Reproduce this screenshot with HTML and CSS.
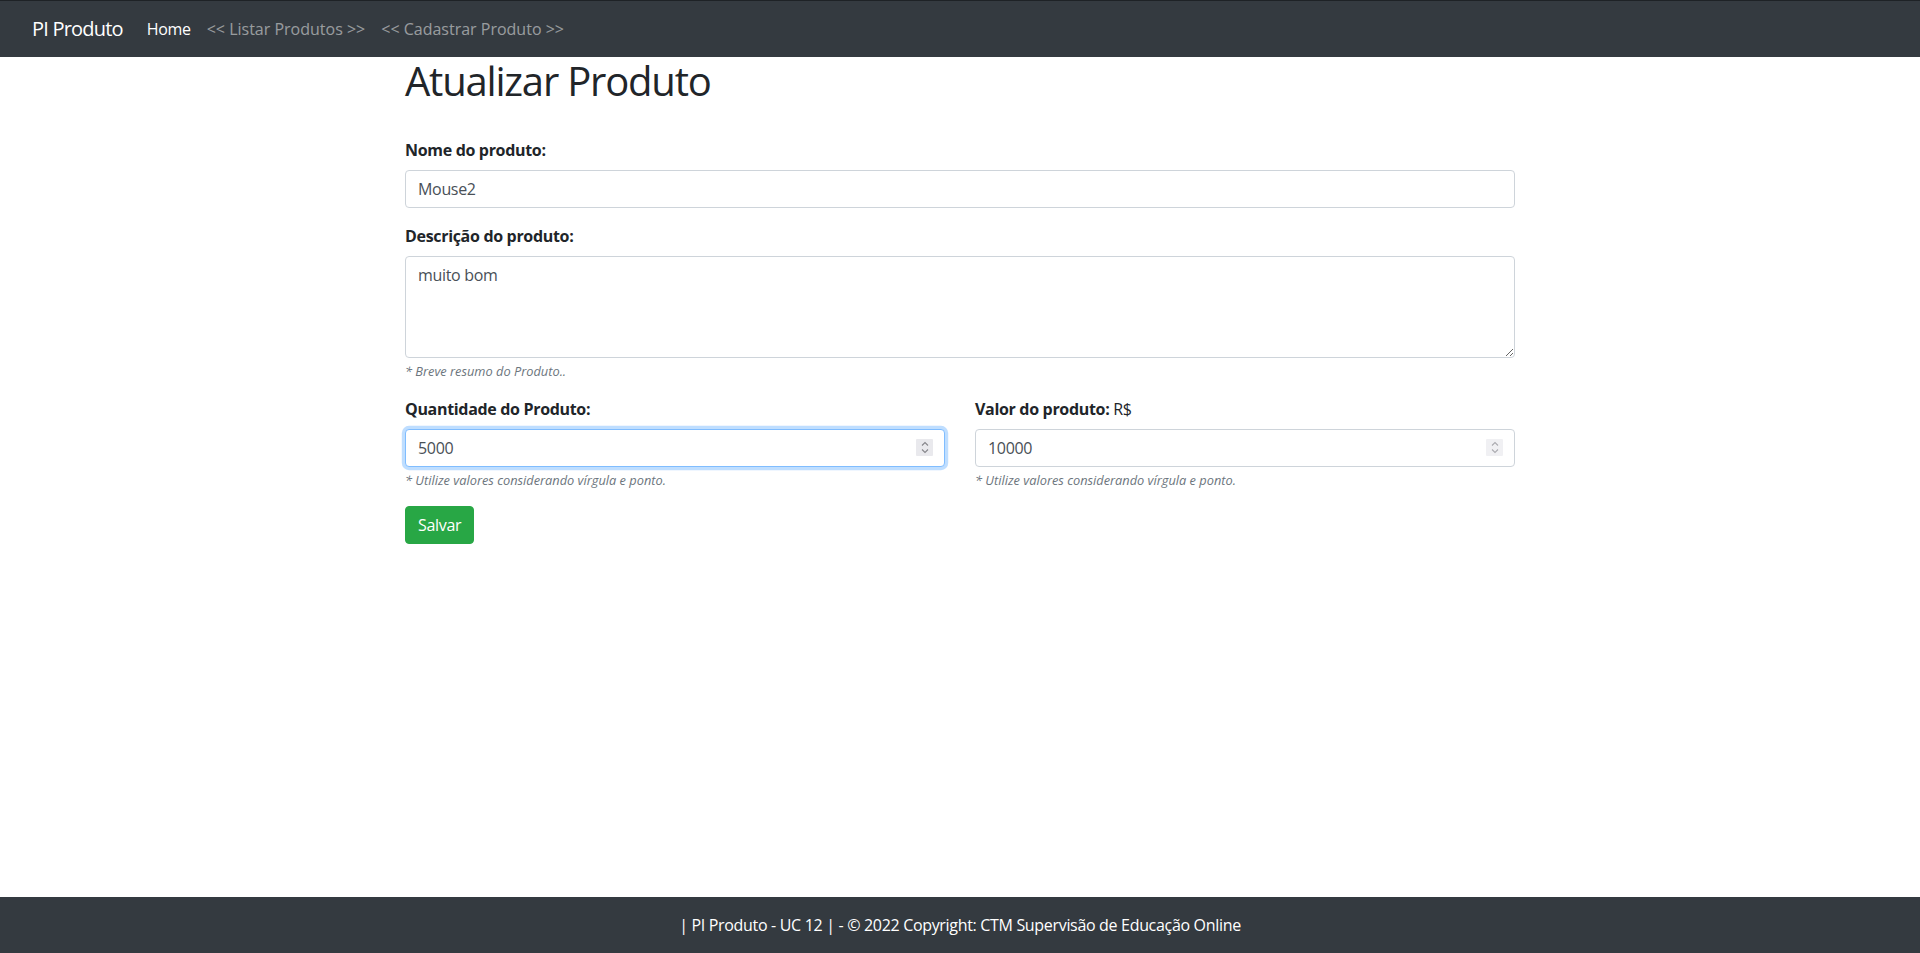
FILE: index.html
```html
<!DOCTYPE html>
<html lang="pt-br">
<head>
<meta charset="utf-8">
<title>PI Produto</title>
<link rel="stylesheet" href="styles.css">
</head>
<body>
<nav class="navbar">
  <a class="brand" href="#">PI Produto</a>
  <ul class="nav">
    <li><a class="nav-link active" href="#">Home</a></li>
    <li><a class="nav-link" href="#">&lt;&lt; Listar Produtos &gt;&gt;</a></li>
    <li><a class="nav-link" href="#">&lt;&lt; Cadastrar Produto &gt;&gt;</a></li>
  </ul>
</nav>
<main class="container">
  <h1 class="title">Atualizar Produto</h1>
  <form class="form">
    <div class="form-group">
      <label class="label" for="nome">Nome do produto:</label>
      <input class="form-control" id="nome" type="text" value="Mouse2">
    </div>
    <div class="form-group">
      <label class="label" for="desc">Descrição do produto:</label>
      <textarea class="form-control textarea" id="desc">muito bom</textarea>
      <small class="form-text">* Breve resumo do Produto..</small>
    </div>
    <div class="row">
      <div class="form-group col">
        <label class="label" for="qtd">Quantidade do Produto:</label>
        <div class="number-wrap">
          <input class="form-control focused" id="qtd" type="number" value="5000">
          <span class="spin" aria-hidden="true">
            <svg width="10" height="15" viewBox="0 0 10 15"><path d="M2 5.5 L5 2.5 L8 5.5 M2 9.5 L5 12.5 L8 9.5" fill="none" stroke="#86868b" stroke-width="1.1"/></svg>
          </span>
        </div>
        <small class="form-text">* Utilize valores considerando vírgula e ponto.</small>
      </div>
      <div class="form-group col">
        <label class="label" for="valor">Valor do produto: <span class="normal">R$</span></label>
        <div class="number-wrap">
          <input class="form-control" id="valor" type="number" value="10000">
          <span class="spin light" aria-hidden="true">
            <svg width="10" height="15" viewBox="0 0 10 15"><path d="M2 5.5 L5 2.5 L8 5.5 M2 9.5 L5 12.5 L8 9.5" fill="none" stroke="#ababb0" stroke-width="1.1"/></svg>
          </span>
        </div>
        <small class="form-text">* Utilize valores considerando vírgula e ponto.</small>
      </div>
    </div>
    <button class="btn-success" type="button">Salvar</button>
  </form>
</main>
<footer class="footer">| PI Produto - UC 12 | - © 2022 Copyright: CTM Supervisão de Educação Online</footer>
</body>
</html>
```
FILE: styles.css
```css
* { box-sizing: border-box; }
html, body { height: 100%; }
body {
  margin: 0;
  font-family: "Open Sans", "Noto Sans", sans-serif;
  font-size: 16px;
  line-height: 1.5;
  letter-spacing: -0.02em;
  color: #212529;
  background: #fff;
  display: flex;
  flex-direction: column;
  min-height: 100vh;
}
.navbar {
  display: flex;
  align-items: center;
  height: 57px;
  padding: 0 16px 0 32px;
  background: #343a40;
  border-top: 1px solid #1e2226;
}
.brand {
  color: #fff;
  font-size: 20px;
  line-height: 30px;
  letter-spacing: -0.04em;
  text-decoration: none;
  margin-right: 16px;
}
.nav {
  display: flex;
  list-style: none;
  margin: 0;
  padding: 0;
}
.nav-link {
  display: block;
  padding: 8px;
  color: rgba(255,255,255,.5);
  text-decoration: none;
  font-size: 16px;
  letter-spacing: 0;
}
.nav-link.active { color: #fff; letter-spacing: -0.02em; }
.container {
  flex: 1;
  width: 1140px;
  margin: 0 auto;
  padding: 0 15px;
}
.title {
  margin: 0 0 8px;
  font-size: 40px;
  font-weight: 400;
  line-height: 1.2;
  letter-spacing: -0.03em;
}
.form { padding-top: 25px; }
.form-group { margin-bottom: 16px; }
.label {
  display: inline-block;
  margin-bottom: 8px;
  font-weight: 700;
}
.normal { font-weight: 400; }
.form-control {
  display: block;
  width: 100%;
  height: 38px;
  padding: 6px 12px;
  font: inherit;
  font-size: 16px;
  line-height: 1.5;
  letter-spacing: inherit;
  color: #495057;
  background: #fff;
  border: 1px solid #ced4da;
  border-radius: 4px;
  outline: none;
}
.form-control[type="number"] { -moz-appearance: textfield; }
.form-control::-webkit-inner-spin-button,
.form-control::-webkit-outer-spin-button {
  -webkit-appearance: none;
  margin: 0;
}
.number-wrap { position: relative; }
.spin {
  position: absolute;
  right: 12px;
  top: 10px;
  width: 17px;
  height: 17px;
  background: #e9e9ed;
  border-radius: 1px;
  display: flex;
  align-items: center;
  justify-content: center;
}
.spin.light { background: #f0f0f3; }
.textarea {
  height: 102px;
  resize: vertical;
}
.focused {
  border-color: #80bdff;
  box-shadow: 0 0 0 3.2px rgba(0,123,255,.25);
}
.form-text {
  display: block;
  margin-top: 4px;
  font-size: 12.8px;
  font-style: italic;
  letter-spacing: 0;
  color: #6c757d;
}
.row {
  display: flex;
  margin: 0 -15px;
}
.col {
  flex: 1;
  padding: 0 15px;
}
.btn-success {
  font: inherit;
  font-size: 16px;
  line-height: 1.5;
  letter-spacing: inherit;
  height: 38px;
  padding: 6px 12px;
  color: #fff;
  background: #28a745;
  border: 1px solid #28a745;
  border-radius: 4px;
}
.footer {
  height: 56px;
  padding: 16px;
  background: #343a40;
  color: #fff;
  text-align: center;
}
```
